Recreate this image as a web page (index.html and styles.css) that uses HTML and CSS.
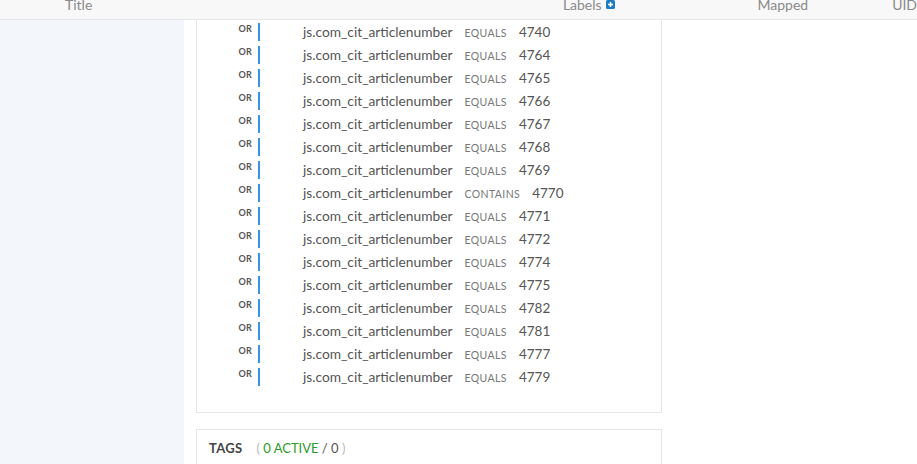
FILE: index.html
```html
<!DOCTYPE html>
<html>
<head>
<meta charset="utf-8">
<link rel="stylesheet" href="styles.css">
</head>
<body>
<div class="header">
  <div class="h-title">Title</div>
  <div class="h-labels">Labels <span class="plus"><svg width="9" height="9" viewBox="0 0 9 9"><rect width="9" height="9" rx="1.5" fill="#1d7bc4"/><path d="M4.5 2v5M2 4.5h5" stroke="#fff" stroke-width="1.6"/></svg></span></div>
  <div class="h-mapped">Mapped</div>
  <div class="h-uid">UID</div>
</div>
<div class="body">
  <div class="sidebar"></div>
  <div class="main">
    <div class="card rules">
      <div class="row"><span class="or">OR</span><span class="bar"></span><span class="field">js.com_cit_articlenumber</span><span class="op">EQUALS</span><span class="val">4740</span></div>
      <div class="row"><span class="or">OR</span><span class="bar"></span><span class="field">js.com_cit_articlenumber</span><span class="op">EQUALS</span><span class="val">4764</span></div>
      <div class="row"><span class="or">OR</span><span class="bar"></span><span class="field">js.com_cit_articlenumber</span><span class="op">EQUALS</span><span class="val">4765</span></div>
      <div class="row"><span class="or">OR</span><span class="bar"></span><span class="field">js.com_cit_articlenumber</span><span class="op">EQUALS</span><span class="val">4766</span></div>
      <div class="row"><span class="or">OR</span><span class="bar"></span><span class="field">js.com_cit_articlenumber</span><span class="op">EQUALS</span><span class="val">4767</span></div>
      <div class="row"><span class="or">OR</span><span class="bar"></span><span class="field">js.com_cit_articlenumber</span><span class="op">EQUALS</span><span class="val">4768</span></div>
      <div class="row"><span class="or">OR</span><span class="bar"></span><span class="field">js.com_cit_articlenumber</span><span class="op">EQUALS</span><span class="val">4769</span></div>
      <div class="row"><span class="or">OR</span><span class="bar"></span><span class="field">js.com_cit_articlenumber</span><span class="op">CONTAINS</span><span class="val">4770</span></div>
      <div class="row"><span class="or">OR</span><span class="bar"></span><span class="field">js.com_cit_articlenumber</span><span class="op">EQUALS</span><span class="val">4771</span></div>
      <div class="row"><span class="or">OR</span><span class="bar"></span><span class="field">js.com_cit_articlenumber</span><span class="op">EQUALS</span><span class="val">4772</span></div>
      <div class="row"><span class="or">OR</span><span class="bar"></span><span class="field">js.com_cit_articlenumber</span><span class="op">EQUALS</span><span class="val">4774</span></div>
      <div class="row"><span class="or">OR</span><span class="bar"></span><span class="field">js.com_cit_articlenumber</span><span class="op">EQUALS</span><span class="val">4775</span></div>
      <div class="row"><span class="or">OR</span><span class="bar"></span><span class="field">js.com_cit_articlenumber</span><span class="op">EQUALS</span><span class="val">4782</span></div>
      <div class="row"><span class="or">OR</span><span class="bar"></span><span class="field">js.com_cit_articlenumber</span><span class="op">EQUALS</span><span class="val">4781</span></div>
      <div class="row"><span class="or">OR</span><span class="bar"></span><span class="field">js.com_cit_articlenumber</span><span class="op">EQUALS</span><span class="val">4777</span></div>
      <div class="row"><span class="or">OR</span><span class="bar"></span><span class="field">js.com_cit_articlenumber</span><span class="op">EQUALS</span><span class="val">4779</span></div>
    </div>
    <div class="card tags">
      <span class="tags-title">TAGS</span>
      <span class="tags-count"><span class="paren">(</span> <span class="active">0 ACTIVE</span> / 0 <span class="paren">)</span></span>
    </div>
  </div>
</div>
</body>
</html>
```
FILE: styles.css
```css
* { box-sizing: border-box; }
html, body { margin: 0; padding: 0; height: 100%; overflow: hidden; background: #fff; }
body { font-family: Lato, "Open Sans", sans-serif; color: #555; }

.header {
  height: 20px;
  background: #f8f8f8;
  border-bottom: 1px solid #e6e6e6;
  display: flex;
  align-items: center;
  font-size: 14px;
  color: #8a8a8a;
  line-height: 1;
  padding-bottom: 10px;
  white-space: nowrap;
  overflow: hidden;
}
.h-title { margin-left: 65px; width: 499px; }
.h-labels { width: 195px; display: flex; align-items: center; gap: 4px; }
.plus { display: inline-flex; margin-top: -1px; }
.plus svg { display: block; }
.h-mapped { width: 135px; }

.body { display: flex; height: calc(100% - 20px); }
.sidebar { width: 184px; background: #f3f6fb; flex: none; }
.main { padding-left: 12px; width: 478px; }

.card { border: 1px solid #e6e6e6; background: #fff; }
.rules { border-top: none; padding: 2px 0 26px 0; height: 393px; }

.row {
  display: flex;
  align-items: flex-start;
  height: 23px;
}
.or {
  width: 55px;
  text-align: right;
  font-size: 9px;
  font-weight: 700;
  color: #555;
  padding-top: 1px;
  letter-spacing: 0.2px;
}
.bar {
  width: 2px;
  height: 18px;
  background: #3a92e6;
  margin-left: 6px;
  margin-top: 1px;
}
.field {
  margin-left: 43px;
  font-size: 13.75px;
  color: #555;
  line-height: 18px;
  padding-top: 1px;
}
.op {
  margin-left: 12px;
  font-size: 10.5px;
  color: #777;
  letter-spacing: 0.4px;
  line-height: 18px;
  padding-top: 2px;
}
.val {
  margin-left: 12px;
  font-size: 13.5px;
  color: #555;
  line-height: 18px;
  padding-top: 1px;
}

.tags { margin-top: 16px; height: 35px; border-bottom: none; padding: 10px 12px; display: flex; align-items: baseline; }
.tags-title { font-size: 13px; font-weight: 700; color: #444; letter-spacing: 0.3px; }
.tags-count { margin-left: 14px; font-size: 13px; color: #555; }
.paren { color: #bbb; }
.active { color: #2c9a2c; }
```
